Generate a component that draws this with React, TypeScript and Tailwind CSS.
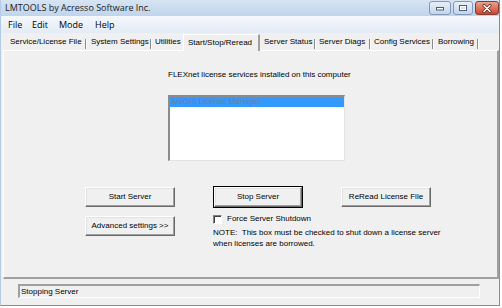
const ui = { fontFamily: '"Liberation Sans", Arial, sans-serif' };
const seg = { fontFamily: '"Open Sans", "Liberation Sans", sans-serif' };

const tabs = [
	{ label: 'Service/License File', w: 81, pl: 6 },
	{ label: 'System Settings', w: 63, pl: 4 },
	{ label: 'Utilities', w: 31, pl: 3, noSep: true },
	{ label: 'Start/Stop/Reread', w: 77, pl: 4, selected: true },
	{ label: 'Server Status', w: 54, pl: 4 },
	{ label: 'Server Diags', w: 53, pl: 3 },
	{ label: 'Config Services', w: 61, pl: 3 },
	{ label: 'Borrowing', w: 43, pl: 4 },
];

function TitleBar() {
	return (
		<div className="flex h-[16px] shrink-0 items-start bg-gradient-to-b from-[#d6e4f4] to-[#bfd4ec]">
			<span className="ml-[4px] mt-[1px] text-[9px] leading-[14px] text-[#1b1b1b]" style={seg}>
				LMTOOLS by Acresso Software Inc.
			</span>
			<div className="ml-auto mt-[1px] flex gap-[2px]">
				<div className="flex h-[14px] w-[22px] items-center justify-center rounded-[3px] border border-[#8298b8] bg-gradient-to-b from-[#e8eff8] to-[#c3d4ea]">
					<svg width="10" height="6" viewBox="0 0 10 6">
						<rect x="1.5" y="2.5" width="7" height="2.5" fill="#fff" stroke="#4e5f78" strokeWidth="1" />
					</svg>
				</div>
				<div className="flex h-[14px] w-[20px] items-center justify-center rounded-[3px] border border-[#8298b8] bg-gradient-to-b from-[#e8eff8] to-[#c3d4ea]">
					<svg width="10" height="8" viewBox="0 0 10 8">
						<rect x="1.5" y="1.5" width="7" height="5" fill="none" stroke="#4e5f78" strokeWidth="1" />
						<rect x="2.5" y="2.5" width="5" height="3" fill="none" stroke="#fff" strokeWidth="1" />
					</svg>
				</div>
				<div className="flex h-[14px] w-[24px] items-center justify-center rounded-[3px] border border-[#8a3a2e] bg-gradient-to-b from-[#e9a08f] to-[#c9452c]">
					<svg width="10" height="9" viewBox="0 0 10 9">
						<path d="M2 1.5 L8 7.5 M8 1.5 L2 7.5" stroke="#5b2218" strokeWidth="3" strokeLinecap="round" />
						<path d="M2 1.5 L8 7.5 M8 1.5 L2 7.5" stroke="#fff" strokeWidth="1.6" strokeLinecap="round" />
					</svg>
				</div>
			</div>
		</div>
	);
}

function MenuBar() {
	const items = [
		{ label: 'File', w: 24 },
		{ label: 'Edit', w: 27 },
		{ label: 'Mode', w: 36 },
		{ label: 'Help', w: 30 },
	];
	return (
		<div className="flex h-[17px] shrink-0 items-center bg-gradient-to-b from-[#f5f8fc] to-[#e4ebf5] pl-[7px]">
			{items.map((m) => (
				<span key={m.label} className="text-[9px] leading-[14px] text-black" style={{ ...seg, width: m.w }}>
					{m.label}
				</span>
			))}
		</div>
	);
}

function TabRow() {
	return (
		<div className="mt-[1px] flex h-[16px] shrink-0 items-end pl-[3px]" style={ui}>
			{tabs.map((t) => (
				<div key={t.label} className="flex h-full items-center">
					{t.selected ? (
						<div
							className="relative z-10 flex h-[17px] items-center border-l border-r-2 border-t border-l-white border-r-[#a0a0a0] border-t-white bg-[#f0f0f0] text-[8px] leading-[10px] text-black"
							style={{ width: t.w, paddingLeft: t.pl }}
						>
							{t.label}
						</div>
					) : (
						<div className="flex h-full items-center text-[8px] leading-[10px] text-black" style={{ width: t.w, paddingLeft: t.pl }}>
							{t.label}
						</div>
					)}
					{!t.selected && !t.noSep && <div className="mt-[4px] h-[10px] w-[2px] border-l border-r border-l-[#8a8a8a] border-r-white" />}
				</div>
			))}
		</div>
	);
}

function Btn({ label, w, h = 20 }: { label: string; w: number; h?: number }) {
	return (
		<div
			className="flex items-center justify-center border border-b-[#696969] border-l-white border-r-[#696969] border-t-white bg-[#f0f0f0] text-[8px] leading-[10px] text-black shadow-[inset_-1px_-1px_0_#a0a0a0,inset_1px_1px_0_#e3e3e3]"
			style={{ width: w, height: h }}
		>
			{label}
		</div>
	);
}

export default function App() {
	return (
		<div className="h-[308px] w-[502px] bg-white">
			<div className="flex h-[306px] w-[500px] flex-col overflow-hidden border-b border-l border-r border-b-[#3aa7e2] border-l-[#b4cbe6] border-r-[#3aa7e2] bg-[#f0f0f0]">
				<TitleBar />
				<MenuBar />
				<TabRow />

				<div className="ml-[2px] flex h-[229px] w-[496px] shrink-0 flex-col border-b-2 border-l border-r-2 border-t border-b-[#a0a0a0] border-l-white border-r-[#a0a0a0] border-t-white" style={ui}>
					<div className="ml-[164px] mt-[19px] text-[8px] leading-[10px] text-black">FLEXnet license services installed on this computer</div>

					<div className="ml-[164px] mt-[15px] h-[66px] w-[177px] border-b border-l-2 border-r border-t-2 border-b-[#e3e3e3] border-l-[#8c8c8c] border-r-[#e3e3e3] border-t-[#8c8c8c] bg-white">
						<div className="h-[10px] bg-[#3399ff] pl-[1px] text-[8px] leading-[10px] text-[#6f7e98]">ArcGIS License Manager</div>
					</div>

					<div className="ml-[81px] mt-[25px] flex h-[22px] items-center gap-[38px]">
						<Btn label="Start Server" w={90} h={20} />
						<div className="border border-black">
							<Btn label="Stop Server" w={88} h={20} />
						</div>
						<Btn label="ReRead License File" w={90} h={20} />
					</div>

					<div className="ml-[81px] mt-[6px] flex gap-[38px]">
						<div className="mt-[2px]">
							<Btn label="Advanced settings >>" w={90} h={20} />
						</div>
						<div className="flex flex-col">
							<div className="flex h-[10px] items-center gap-[5px]">
								<div className="h-[9px] w-[9px] border-b border-l border-r border-t border-b-white border-l-[#808080] border-r-white border-t-[#808080] bg-white shadow-[inset_1px_1px_0_#404040]" />
								<span className="text-[8px] leading-[10px] text-black">Force Server Shutdown</span>
							</div>
							<div className="mt-[3px] text-[8px] leading-[11px] text-black">
								<div className="whitespace-pre">NOTE:  This box must be checked to shut down a license server</div>
								<div>when licenses are borrowed.</div>
							</div>
						</div>
					</div>
				</div>

				<div className="ml-[17px] mt-[5px] flex h-[14px] w-[462px] items-center border-b border-l-2 border-r border-t-2 border-b-white border-l-[#a0a0a0] border-r-white border-t-[#a0a0a0] pl-[1px] text-[8px] leading-[10px] text-black" style={ui}>
					Stopping Server
				</div>
			</div>
		</div>
	);
}
